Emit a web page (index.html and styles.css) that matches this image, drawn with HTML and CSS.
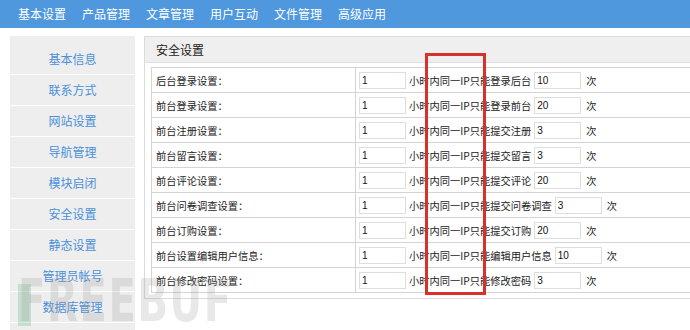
FILE: index.html
```html
<!DOCTYPE html>
<html lang="zh">
<head>
<meta charset="utf-8">
<title>安全设置</title>
<link rel="stylesheet" href="styles.css">
</head>
<body>
<nav class="nav">
  <a class="nav-item">基本设置</a>
  <a class="nav-item">产品管理</a>
  <a class="nav-item">文章管理</a>
  <a class="nav-item">用户互动</a>
  <a class="nav-item">文件管理</a>
  <a class="nav-item">高级应用</a>
</nav>
<div class="page">
  <aside class="sidebar">
    <a class="side-item">基本信息</a>
    <a class="side-item">联系方式</a>
    <a class="side-item">网站设置</a>
    <a class="side-item">导航管理</a>
    <a class="side-item">模块启闭</a>
    <a class="side-item">安全设置</a>
    <a class="side-item">静态设置</a>
    <a class="side-item">管理员帐号</a>
    <a class="side-item">数据库管理</a>
  </aside>
  <main class="panel">
    <div class="panel-head">安全设置</div>
    <div class="panel-body">
      <table class="form-table">
        <tr><td class="lbl">后台登录设置：</td><td class="val"><input class="inp" value="1"><span class="txt">小时内同一IP只能登录后台</span><input class="inp" value="10"><span class="unit">次</span></td></tr>
        <tr><td class="lbl">前台登录设置：</td><td class="val"><input class="inp" value="1"><span class="txt">小时内同一IP只能登录前台</span><input class="inp" value="20"><span class="unit">次</span></td></tr>
        <tr><td class="lbl">前台注册设置：</td><td class="val"><input class="inp" value="1"><span class="txt">小时内同一IP只能提交注册</span><input class="inp" value="3"><span class="unit">次</span></td></tr>
        <tr><td class="lbl">前台留言设置：</td><td class="val"><input class="inp" value="1"><span class="txt">小时内同一IP只能提交留言</span><input class="inp" value="3"><span class="unit">次</span></td></tr>
        <tr><td class="lbl">前台评论设置：</td><td class="val"><input class="inp" value="1"><span class="txt">小时内同一IP只能提交评论</span><input class="inp" value="20"><span class="unit">次</span></td></tr>
        <tr><td class="lbl">前台问卷调查设置：</td><td class="val"><input class="inp" value="1"><span class="txt">小时内同一IP只能提交问卷调查</span><input class="inp" value="3"><span class="unit">次</span></td></tr>
        <tr><td class="lbl">前台订购设置：</td><td class="val"><input class="inp" value="1"><span class="txt">小时内同一IP只能提交订购</span><input class="inp" value="20"><span class="unit">次</span></td></tr>
        <tr><td class="lbl">前台设置编辑用户信息：</td><td class="val"><input class="inp" value="1"><span class="txt">小时内同一IP只能编辑用户信息</span><input class="inp" value="10"><span class="unit">次</span></td></tr>
        <tr><td class="lbl">前台修改密码设置：</td><td class="val"><input class="inp" value="1"><span class="txt">小时内同一IP只能修改密码</span><input class="inp" value="3"><span class="unit">次</span></td></tr>
      </table>
    </div>
  </main>
</div>
<div class="watermark" aria-hidden="true"><span class="wm-stem"></span><span class="wm-text">FREEBUF</span></div>
<div class="highlight" aria-hidden="true"></div>
</body>
</html>
```

FILE: styles.css
```css
html, body {
  margin: 0;
  padding: 0;
  overflow: hidden;
  background: #fff;
}
body {
  width: 690px;
  height: 330px;
  position: relative;
  font-family: "Noto Sans CJK SC", "Noto Sans", sans-serif;
  color: #333;
}
.nav {
  height: 28px;
  background: #4f98de;
  display: flex;
  align-items: center;
  gap: 16px;
  padding-left: 18px;
}
.nav-item {
  color: #fff;
  font-size: 12px;
  line-height: 28px;
  width: 48px;
  white-space: nowrap;
}
.page {
  display: flex;
  gap: 9px;
  padding: 8px 0 0 10px;
}
.sidebar {
  width: 125px;
  flex: none;
  background: #eeeeee;
  padding-top: 8px;
  display: flex;
  flex-direction: column;
  height: 286px;
}
.side-item {
  height: 30px;
  line-height: 30px;
  border-bottom: 1px solid #fff;
  text-align: center;
  color: #4a90d9;
  font-size: 12px;
}
.panel {
  flex: 1;
  min-width: 0;
  border: 1px solid #dcdcdc;
  border-right: none;
  height: 261px;
}
.panel-head {
  height: 25px;
  line-height: 25px;
  background: #efefef;
  border-bottom: 1px solid #e0e0e0;
  padding-left: 11px;
  font-size: 12px;
  color: #222;
}
.panel-body {
  padding: 4px 0 0 6px;
}
.form-table {
  border-collapse: collapse;
  width: 100%;
  font-size: 10.25px;
}
.form-table td {
  border: 1px solid #d4d4d4;
  height: 24px;
  padding: 0;
  white-space: nowrap;
}
.form-table td.val {
  border-right: none;
}
.lbl {
  width: 199px;
  padding-left: 4px !important;
  color: #222;
}
.val {
  padding-left: 3px !important;
}
.inp {
  width: 41px;
  height: 15px;
  border: 1px solid #dedede;
  padding: 0 2px;
  font-size: 10px;
  font-family: "Liberation Sans", sans-serif;
  color: #111;
  vertical-align: middle;
  margin: 0;
}
.txt, .unit {
  vertical-align: middle;
  color: #222;
  margin: 0 3px;
}
.unit {
  margin-left: 5px;
}
.watermark {
  position: absolute;
  left: 18px;
  top: 271px;
  height: 60px;
  pointer-events: none;
}
.wm-text {
  font-family: "DejaVu Sans Condensed", "DejaVu Sans", sans-serif;
  font-weight: bold;
  font-size: 58px;
  line-height: 60px;
  color: rgba(150, 150, 150, 0.22);
  display: inline-block;
  transform: scaleX(0.77);
  transform-origin: left center;
  letter-spacing: 2px;
}
.wm-stem {
  position: absolute;
  left: 0;
  top: 13px;
  width: 13px;
  height: 42px;
  background: rgba(100, 180, 130, 0.28);
}
.highlight {
  position: absolute;
  left: 425px;
  top: 53px;
  width: 55px;
  height: 236px;
  border: 3px solid #d8302a;
}
```
